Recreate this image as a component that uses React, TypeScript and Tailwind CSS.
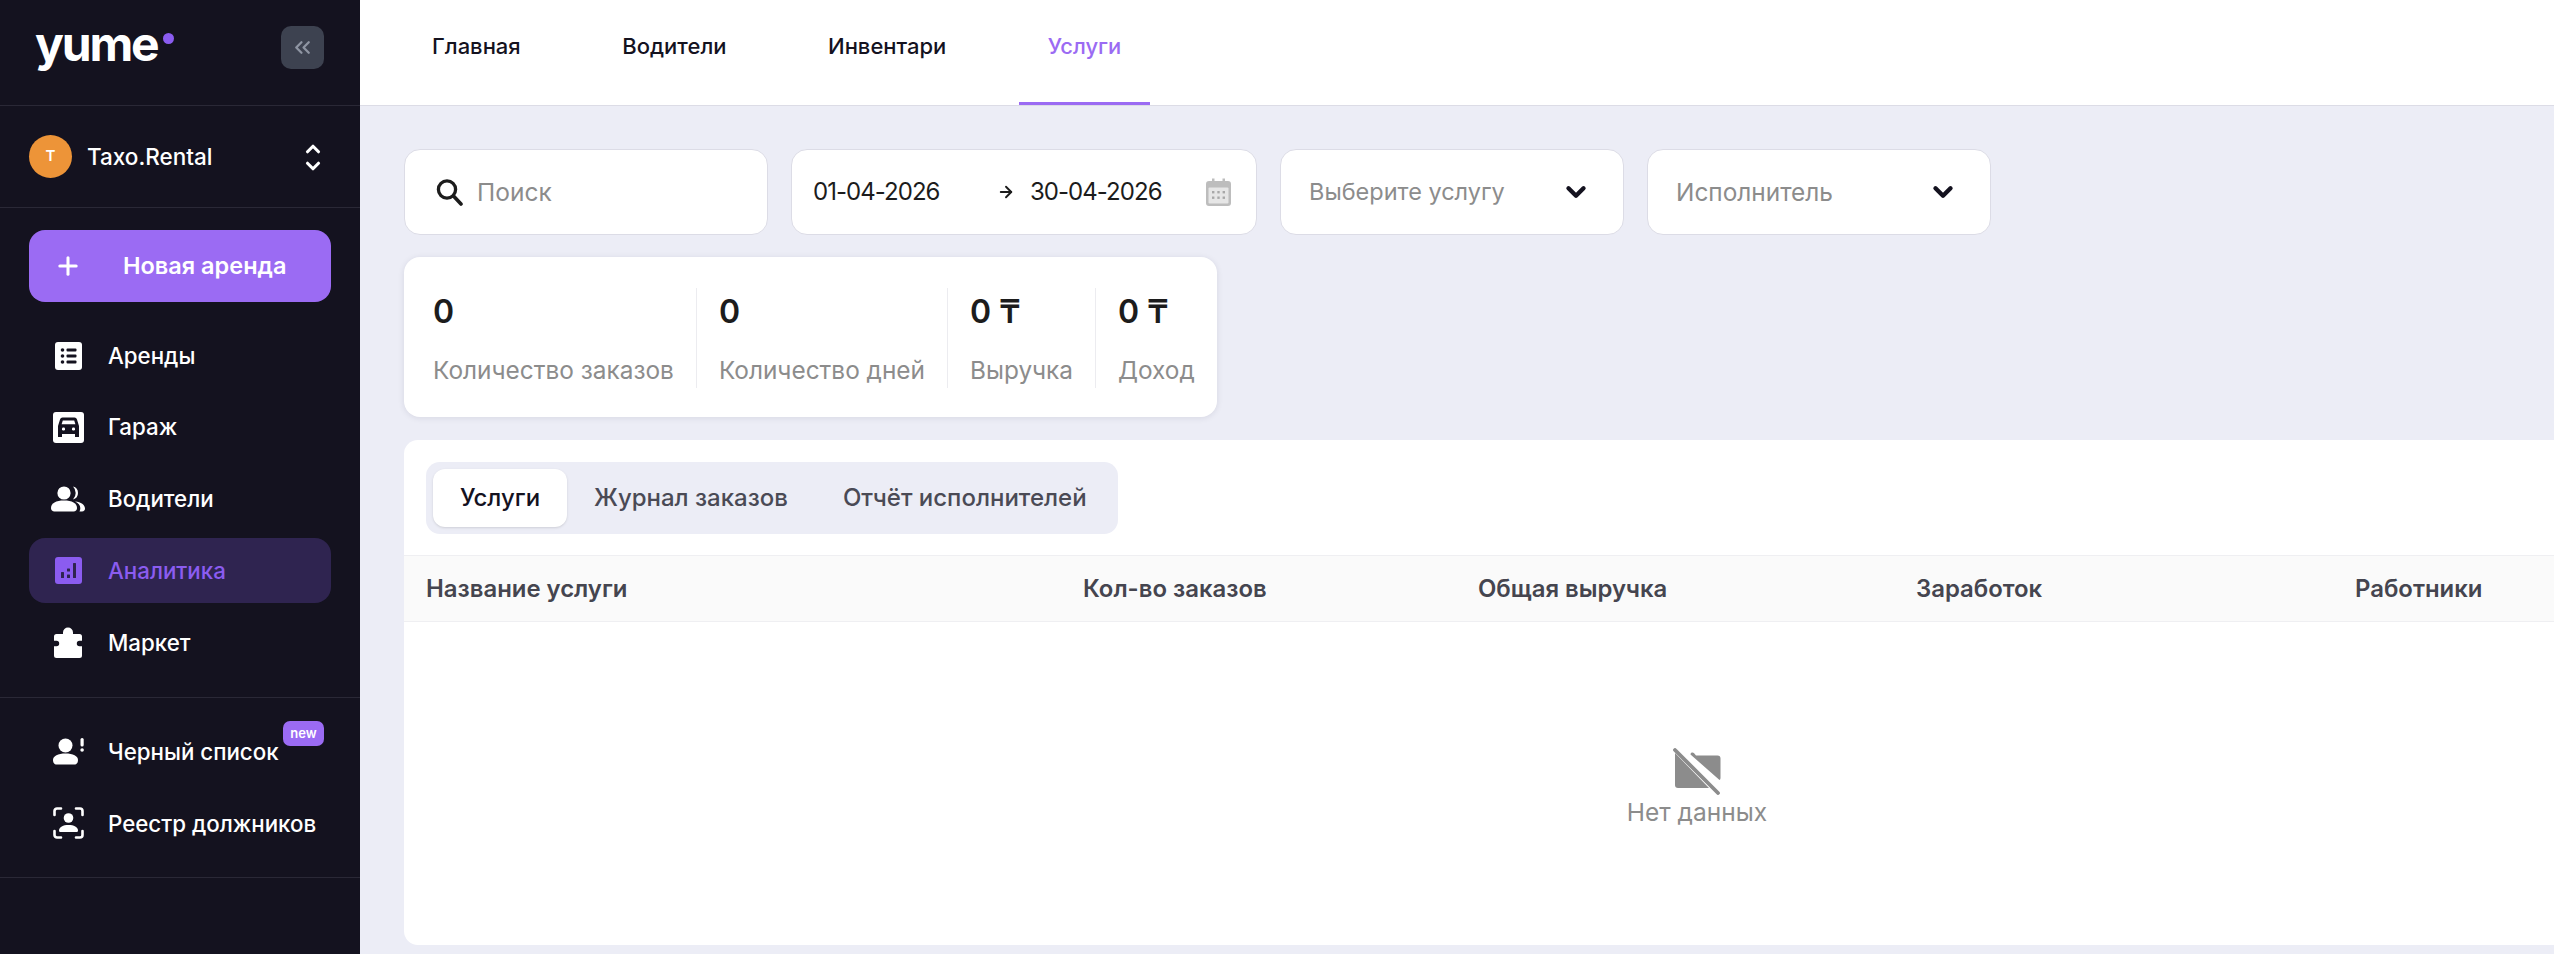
import { ReactNode } from "react";
import { ArrowRight, ChevronDown, ChevronsLeft, ChevronUp, Plus } from "lucide-react";

const DARK = "#14121f";

function ListIcon() {
  return (
    <svg width="27" height="28" viewBox="0 0 27 28">
      <rect width="27" height="28" rx="3" fill="#fff" />
      <g fill={DARK}>
        <circle cx="7.5" cy="8" r="1.8" />
        <circle cx="7.5" cy="14" r="1.8" />
        <circle cx="7.5" cy="20" r="1.8" />
        <rect x="11.5" y="6.5" width="10" height="3" rx="1" />
        <rect x="11.5" y="12.5" width="10" height="3" rx="1" />
        <rect x="11.5" y="18.5" width="10" height="3" rx="1" />
      </g>
    </svg>
  );
}

function GarageIcon() {
  return (
    <svg width="31" height="31" viewBox="0 0 31 31">
      <rect width="31" height="31" rx="3" fill="#fff" />
      <path d="M9.5 5.5h12a2.5 2.5 0 0 1 2.4 1.8L26 14v11h-4v-3H9v3H5V14l2.1-6.700a2.5 2.5 0 0 1 2.4-1.800z" fill={DARK} />
      <path d="M9.8 8.500h11.400l1.200 3.800H8.600z" fill="#fff" />
      <rect x="9" y="15.500" width="3" height="3" rx="1.200" fill="#fff" />
      <rect x="19" y="15.500" width="3" height="3" rx="1.200" fill="#fff" />
    </svg>
  );
}

function UsersIcon() {
  return (
    <svg width="34" height="26" viewBox="0 0 34 26" fill="#fff">
      <circle cx="13" cy="7" r="6.600" />
      <path d="M22 .6a6.600 6.600 0 0 1 0 12.800 9 9 0 0 0 0-12.800z" />
      <path d="M0 22c0-5 5-7.500 13-7.500S26 17 26 22c0 2.400-1.400 3.400-3.400 3.400H3.400C1.400 25.400 0 24.400 0 22z" />
      <path d="M24 15.500c6 .7 10 3.300 10 7 0 1.800-1 2.900-3 2.900h-2.500c.6-1 .8-2.200.8-3.400 0-2.600-2-5-5.300-6.500z" />
    </svg>
  );
}

function ChartIcon() {
  return (
    <svg width="27" height="27" viewBox="0 0 27 27">
      <rect width="27" height="27" rx="3" fill="#8b5cf0" />
      <g fill="#2f2450">
        <rect x="6" y="15" width="3" height="6" rx="0.5" />
        <rect x="12" y="11.500" width="3" height="3" rx="0.5" />
        <rect x="12" y="17.500" width="3" height="3.500" rx="0.5" />
        <rect x="18" y="6" width="3" height="15" rx="0.5" />
      </g>
    </svg>
  );
}

function PuzzleIcon() {
  return (
    <svg width="28" height="31" viewBox="0 0 28 31" fill="#fff">
      <path d="M9 7V5.500a5 5 0 0 1 10 0V7h6.500A2.500 2.500 0 0 1 28 9.500v4.300h-2.500a2.700 2.700 0 0 0 0 5.400H28V28.500a2.500 2.500 0 0 1-2.500 2.500h-23A2.500 2.500 0 0 1 0 28.500v-9.300h2.500a2.700 2.700 0 0 0 0-5.400H0V9.500A2.500 2.500 0 0 1 2.500 7z" />
    </svg>
  );
}

function PersonAlertIcon() {
  return (
    <svg width="31" height="27" viewBox="0 0 31 27" fill="#fff">
      <circle cx="12.500" cy="7.500" r="7" />
      <path d="M0 22c0-4 5-6.500 12.500-6.500S25 18 25 22c0 3-1.500 4.600-4 4.600H4c-2.500 0-4-1.600-4-4.600z" />
      <rect x="27.500" y="0" width="3.200" height="8.500" rx="1.500" />
      <circle cx="29.100" cy="12" r="1.800" />
    </svg>
  );
}

function FaceScanIcon() {
  return (
    <svg width="31" height="32" viewBox="0 0 31 32">
      <g fill="none" stroke="#fff" strokeWidth="2.600" strokeLinecap="round">
        <path d="M8 1.500H4A2.500 2.500 0 0 0 1.500 4v4" />
        <path d="M23 1.500h4A2.500 2.500 0 0 1 29.500 4v4" />
        <path d="M8 30.500H4A2.500 2.500 0 0 1 1.500 28v-4" />
        <path d="M23 30.500h4a2.500 2.500 0 0 0 2.500-2.500v-4" />
      </g>
      <circle cx="15.500" cy="11" r="4.800" fill="#fff" />
      <path d="M6 23.500c0-3.500 4.200-5.500 9.500-5.500s9.500 2 9.500 5.500c0 1-.7 1.500-1.700 1.500H7.700C6.700 25 6 24.500 6 23.500z" fill="#fff" />
    </svg>
  );
}

function SearchGlyph() {
  return (
    <svg width="28" height="27" viewBox="0 0 28 27" fill="none" stroke="#1c1c1c">
      <circle cx="11" cy="10.500" r="8.600" strokeWidth="3.300" />
      <path d="M17.500 17l7.500 8" strokeWidth="3.600" strokeLinecap="round" />
    </svg>
  );
}

function CalendarIcon() {
  return (
    <svg width="25" height="28" viewBox="0 0 25 28">
      <path d="M3 3h3V0.500h2.500V3h8V0.500H19V3h3a3 3 0 0 1 3 3v19a3 3 0 0 1-3 3H3a3 3 0 0 1-3-3V6a3 3 0 0 1 3-3z" fill="#bdbdbd" />
      <rect x="2.500" y="9.500" width="20" height="16" rx="1" fill="#e6e6e6" />
      <g fill="#a8a8a8">
        <rect x="6" y="13" width="2.400" height="2.400" />
        <rect x="11.300" y="13" width="2.400" height="2.400" />
        <rect x="16.600" y="13" width="2.400" height="2.400" />
        <rect x="6" y="18.500" width="2.400" height="2.400" />
        <rect x="11.300" y="18.500" width="2.400" height="2.400" />
        <rect x="16.600" y="18.500" width="2.400" height="2.400" />
      </g>
    </svg>
  );
}

function EmptyIcon() {
  return (
    <svg width="48" height="47" viewBox="0 0 48 47">
      <path d="M2 5l34 35H5a3 3 0 0 1-3-3z" fill="#8c8c8c" />
      <path d="M17.500 6.500a2 2 0 0 1 3.400-1.500L23 7.500h21.500a3 3 0 0 1 3 3V30a2.500 2.500 0 0 1-1 2z" fill="#8c8c8c" />
      <path d="M2 2l43 43" stroke="#8c8c8c" strokeWidth="3.800" strokeLinecap="round" />
    </svg>
  );
}

type MenuItem = { label: string; icon: ReactNode; active?: boolean; badge?: boolean };

const mainMenu: MenuItem[] = [
  { label: "Аренды", icon: <ListIcon /> },
  { label: "Гараж", icon: <GarageIcon /> },
  { label: "Водители", icon: <UsersIcon /> },
  { label: "Аналитика", icon: <ChartIcon />, active: true },
  { label: "Маркет", icon: <PuzzleIcon /> },
];

const extraMenu: MenuItem[] = [
  { label: "Черный список", icon: <PersonAlertIcon />, badge: true },
  { label: "Реестр должников", icon: <FaceScanIcon /> },
];

function MenuRow({ item }: { item: MenuItem }) {
  return (
    <div
      className={`relative flex h-[65px] items-center rounded-[16px] pl-[19px] ${
        item.active ? "bg-[#2f2450] text-[#8b5cf0]" : "text-white"
      }`}
    >
      <span className="flex w-[40px] justify-center">{item.icon}</span>
      <span className="ml-[20px] text-[22.300px] font-medium">{item.label}</span>
      {item.badge && (
        <span className="absolute right-[7px] top-[2px] flex h-[25px] w-[41px] items-center justify-center rounded-[7px] bg-[#9b6bf3] text-[13px] font-semibold text-white">
          new
        </span>
      )}
    </div>
  );
}

function Sidebar() {
  return (
    <aside className="flex h-full w-[360px] shrink-0 flex-col bg-[#14121f]">
      <div className="flex h-[106px] shrink-0 items-start justify-between border-b border-[#2a2836] pl-[35px] pr-[36px] pt-[26px]">
        <div className="flex items-start">
          <span className="-mt-[4px] text-[48px] font-bold leading-[44px] tracking-[-0.045em] text-white">yume</span>
          <span className="ml-[5px] mt-[7px] h-[11px] w-[11px] rounded-full bg-[#8b5cf0]" />
        </div>
        <button className="flex h-[43px] w-[43px] items-center justify-center rounded-[10px] bg-[#3d4250]">
          <ChevronsLeft size={25} strokeWidth={2.2} className="text-[#8f95a3]" />
        </button>
      </div>
      <div className="flex h-[102px] shrink-0 items-center border-b border-[#2a2836] pl-[29px] pr-[36px]">
        <span className="flex h-[43px] w-[43px] items-center justify-center rounded-full bg-[#ed9438] text-[15px] font-semibold text-white">
          T
        </span>
        <span className="ml-[15px] text-[22.500px] font-medium text-white">Taxo.Rental</span>
        <span className="ml-auto flex flex-col items-center pt-[2px] text-white">
          <ChevronUp size={22} strokeWidth={3.400} className="-mb-[5px]" />
          <ChevronDown size={22} strokeWidth={3.400} />
        </span>
      </div>
      <div className="px-[29px] pt-[22px]">
        <button className="flex h-[72px] w-full items-center rounded-[16px] bg-[#9b6bf3] pl-[25px] text-white">
          <Plus size={28} strokeWidth={2.600} />
          <span className="ml-[41px] text-[23.500px] font-semibold">Новая аренда</span>
        </button>
      </div>
      <nav className="flex flex-col gap-[6.700px] px-[29px] pt-[21px]">
        {mainMenu.map((item) => (
          <MenuRow key={item.label} item={item} />
        ))}
      </nav>
      <div className="mt-[22px] flex flex-col gap-[7px] border-y border-[#2a2836] px-[29px] py-[21px]">
        {extraMenu.map((item) => (
          <MenuRow key={item.label} item={item} />
        ))}
      </div>
    </aside>
  );
}

function Tab({ label, active }: { label: string; active?: boolean }) {
  return (
    <div
      className={`flex h-full items-center border-b-[3px] px-[29px] pb-[9px] text-[22px] font-medium ${
        active ? "border-[#9b6bf3] text-[#9b6bf3]" : "border-transparent text-[#14121f]"
      }`}
    >
      {label}
    </div>
  );
}

function SelectBox({ label, textClass }: { label: string; textClass: string }) {
  return (
    <div className="flex h-[86px] w-[344px] items-center justify-between rounded-[16px] border border-[#dcdce6] bg-white pl-[28px] pr-[32px]">
      <span className={`${textClass} text-[#8c8c8c]`}>{label}</span>
      <ChevronDown size={30} strokeWidth={3.500} className="text-[#14121f]" />
    </div>
  );
}

function Stat({ value, label, tenge, last }: { value: string; label: string; tenge?: boolean; last?: boolean }) {
  return (
    <div className={`flex h-[100px] flex-col pr-[22px] ${last ? "" : "mr-[22px] border-r border-[#ececf0]"}`}>
      <span className="text-[32px] font-semibold leading-[48px] text-[#1c1c1c]">
        {value}
        {tenge && " ₸"}
      </span>
      <span className="mt-[15px] whitespace-nowrap text-[24.400px] leading-[38px] text-[#8c8c8c]">{label}</span>
    </div>
  );
}

export default function App() {
  return (
    <div className="flex h-[954px] w-[2554px] overflow-hidden bg-[#ecedf6] font-['Inter',sans-serif]">
      <Sidebar />
      <main className="flex min-w-0 flex-1 flex-col">
        <header className="flex h-[106px] shrink-0 gap-[43.500px] border-b border-[#dcdce6] bg-white pl-[43px]">
          <Tab label="Главная" />
          <Tab label="Водители" />
          <Tab label="Инвентари" />
          <Tab label="Услуги" active />
        </header>

        <div className="flex min-h-0 flex-1 flex-col pl-[44px] pt-[43px]">
          <div className="flex gap-[23px]">
            <div className="flex h-[86px] w-[364px] items-center rounded-[16px] border border-[#dcdce6] bg-white pl-[31px]">
              <SearchGlyph />
              <span className="ml-[13px] text-[24.500px] text-[#8c8c8c]">Поиск</span>
            </div>
            <div className="flex h-[86px] w-[466px] items-center whitespace-nowrap rounded-[16px] border border-[#dcdce6] bg-white pl-[21px] pr-[25px]">
              <span className="w-[127px] text-[24px] tracking-[-0.04em] text-[#1c1c1c]">01-04-2026</span>
              <ArrowRight size={18} strokeWidth={2.500} className="ml-[57px] text-[#1c1c1c]" />
              <span className="ml-[15px] text-[24px] tracking-[-0.04em] text-[#1c1c1c]">30-04-2026</span>
              <span className="ml-auto">
                <CalendarIcon />
              </span>
            </div>
            <SelectBox label="Выберите услугу" textClass="text-[23.500px]" />
            <SelectBox label="Исполнитель" textClass="text-[24.400px]" />
          </div>

          <div className="mt-[22px] flex h-[160px] w-[813px] items-start rounded-[16px] bg-white pl-[29px] pt-[31px] shadow-[0_1px_6px_rgba(30,30,60,0.10)]">
            <Stat value="0" label="Количество заказов" />
            <Stat value="0" label="Количество дней" />
            <Stat value="0" label="Выручка" tenge />
            <Stat value="0" label="Доход" tenge last />
          </div>

          {/* таблица шире экрана, правый край уходит за окно */}
          <section className="mb-[9px] mt-[23px] flex min-h-0 w-[2586px] flex-1 flex-col rounded-[14px] bg-white">
            <div className="px-[22px] pt-[22px]">
              <div className="flex h-[72px] w-[692px] items-center rounded-[14px] bg-[#ecedf6] pl-[7px]">
                <span className="flex h-[58px] w-[134px] items-center justify-center rounded-[12px] bg-white text-[24px] font-medium text-[#14121f] shadow-sm">
                  Услуги
                </span>
                <span className="ml-[27px] text-[24px] font-medium text-[#4a4a55]">Журнал заказов</span>
                <span className="ml-[55px] text-[24px] font-medium text-[#4a4a55]">Отчёт исполнителей</span>
              </div>
            </div>
            <div className="mt-[21px] grid h-[67px] shrink-0 grid-cols-[657px_395px_438px_439px_1fr] items-center border-y border-[#efeff2] bg-[#fafafa] pl-[22px] text-[23.900px] font-semibold text-[#45454f]">
              <span>Название услуги</span>
              <span>Кол-во заказов</span>
              <span>Общая выручка</span>
              <span>Заработок</span>
              <span>Работники</span>
            </div>
            <div className="flex flex-1 flex-col items-center pt-[126px]">
              <EmptyIcon />
              <span className="text-[24.500px] leading-[34px] text-[#8c8c8c]">Нет данных</span>
            </div>
          </section>
        </div>
      </main>
    </div>
  );
}
